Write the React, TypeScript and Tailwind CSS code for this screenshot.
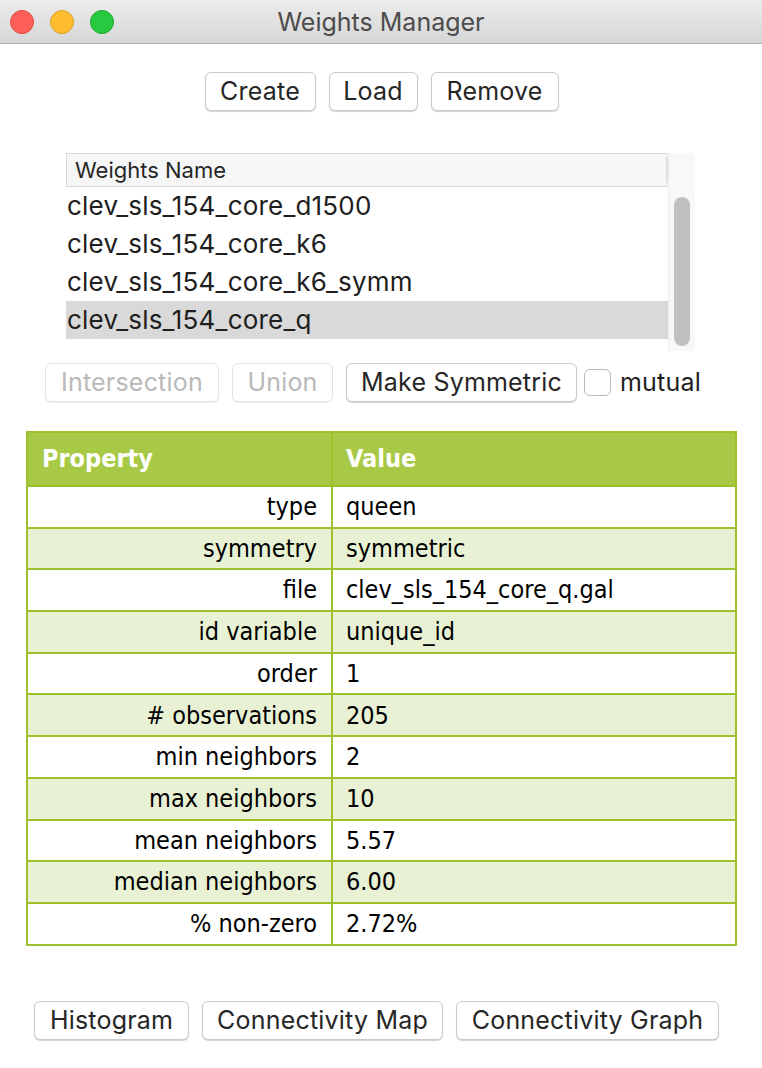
import React from "react";

const rows: [string, string][] = [
  ["type", "queen"],
  ["symmetry", "symmetric"],
  ["file", "clev_sls_154_core_q.gal"],
  ["id variable", "unique_id"],
  ["order", "1"],
  ["# observations", "205"],
  ["min neighbors", "2"],
  ["max neighbors", "10"],
  ["mean neighbors", "5.57"],
  ["median neighbors", "6.00"],
  ["% non-zero", "2.72%"],
];

const weights = [
  "clev_sls_154_core_d1500",
  "clev_sls_154_core_k6",
  "clev_sls_154_core_k6_symm",
  "clev_sls_154_core_q",
];

function MacButton({ label, disabled, className = "" }: { label: string; disabled?: boolean; className?: string }) {
  return (
    <button
      className={`h-[39px] rounded-[6px] border bg-white text-[25px] tracking-[0.2px] leading-none ${
        disabled
          ? "border-[#e3e3e3] text-[#b9b9b9] shadow-[0_1px_1px_rgba(0,0,0,0.06)]"
          : "border-[#cacaca] text-[#262626] shadow-[0_1px_1px_rgba(0,0,0,0.18)]"
      } ${className}`}
    >
      {label}
    </button>
  );
}

export default function App() {
  return (
    <div className="w-[762px] h-[1068px] bg-white flex flex-col font-['Inter','Liberation_Sans',sans-serif] overflow-hidden">
      {/* title bar */}
      <div className="relative h-[44px] shrink-0 bg-gradient-to-b from-[#ececec] to-[#d6d6d6] border-b border-[#b1b1b1] flex items-center justify-center">
        <div className="absolute left-[10px] top-[10px] flex gap-[16px]">
          <span className="w-[24px] h-[24px] rounded-full bg-[#fe5f57] border border-[#e14942]" />
          <span className="w-[24px] h-[24px] rounded-full bg-[#febc2e] border border-[#dfa023]" />
          <span className="w-[24px] h-[24px] rounded-full bg-[#28c840] border border-[#1aab29]" />
        </div>
        <span className="text-[25px] text-[#4c4c4c] pt-[2px]">Weights Manager</span>
      </div>

      {/* top buttons */}
      <div className="mt-[28px] flex justify-center gap-[13px] pl-[1px]">
        <MacButton label="Create" className="w-[111px]" />
        <MacButton label="Load" className="w-[89px]" />
        <MacButton label="Remove" className="w-[128px]" />
      </div>

      {/* weights list */}
      <div className="ml-[66px] mt-[42px] w-[629px] h-[198px] flex">
        <div className="flex-1 flex flex-col">
          <div className="h-[34px] border-t border-b border-[#d8d8d8] bg-[#f6f6f6] flex items-center">
            <div className="h-full border-l border-[#d8d8d8]" />
            <span className="pl-[8px] text-[22px] text-[#262626]">Weights Name</span>
            <div className="ml-auto h-[26px] border-r-2 border-[#e0e0e0]" />
          </div>
          {weights.map((w, i) => (
            <div
              key={w}
              className={`h-[38px] flex items-center text-[26px] tracking-[0.2px] text-[#1e1e1e] ${i === 3 ? "bg-[#d9d9d9]" : ""}`}
            >
              <span className="pl-[1px] -mt-[2px]">{w}</span>
            </div>
          ))}
        </div>
        <div className="w-[27px] bg-[#f8f8f8] border-l border-[#ececec] flex justify-center pt-[44px] pb-[5px]">
          <div className="w-[16px] h-[149px] rounded-full bg-[#c1c1c1]" />
        </div>
      </div>

      {/* operations row */}
      <div className="ml-[45px] mt-[12px] flex items-center">
        <MacButton label="Intersection" disabled className="w-[174px]" />
        <MacButton label="Union" disabled className="w-[101px] ml-[13px]" />
        <MacButton label="Make Symmetric" className="w-[231px] ml-[13px]" />
        <span className="ml-[7px] w-[27px] h-[27px] rounded-[6px] border border-[#b8b8b8] bg-white" />
        <span className="ml-[9px] text-[25px] tracking-[0.2px] text-[#1e1e1e]">mutual</span>
      </div>

      {/* property table */}
      <div className="ml-[26px] mt-[29px] w-[711px] border-2 border-[#9cc12a] font-['DejaVu_Sans_Condensed','DejaVu_Sans',sans-serif] text-[25px] text-black">
        <div className="h-[52px] grid grid-cols-[305px_1fr] bg-[#a7c945] text-white font-bold text-[25px]">
          <div className="flex items-center pl-[14px] border-r-2 border-[#9cc12a]">Property</div>
          <div className="flex items-center pl-[13px]">Value</div>
        </div>
        {rows.map(([k, v], i) => (
          <div
            key={k}
            className={`h-[41.7px] grid grid-cols-[305px_1fr] border-t-2 border-[#9cc12a] ${i % 2 === 1 ? "bg-[#e8f1d4]" : "bg-white"}`}
          >
            <div className="flex items-center justify-end pr-[14px] border-r-2 border-[#9cc12a]">{k}</div>
            <div className="flex items-center pl-[13px]">{v}</div>
          </div>
        ))}
      </div>

      {/* bottom buttons */}
      <div className="ml-[34px] mt-[55px] flex gap-[13px]">
        <MacButton label="Histogram" className="w-[155px]" />
        <MacButton label="Connectivity Map" className="w-[241px]" />
        <MacButton label="Connectivity Graph" className="w-[263px]" />
      </div>
    </div>
  );
}
